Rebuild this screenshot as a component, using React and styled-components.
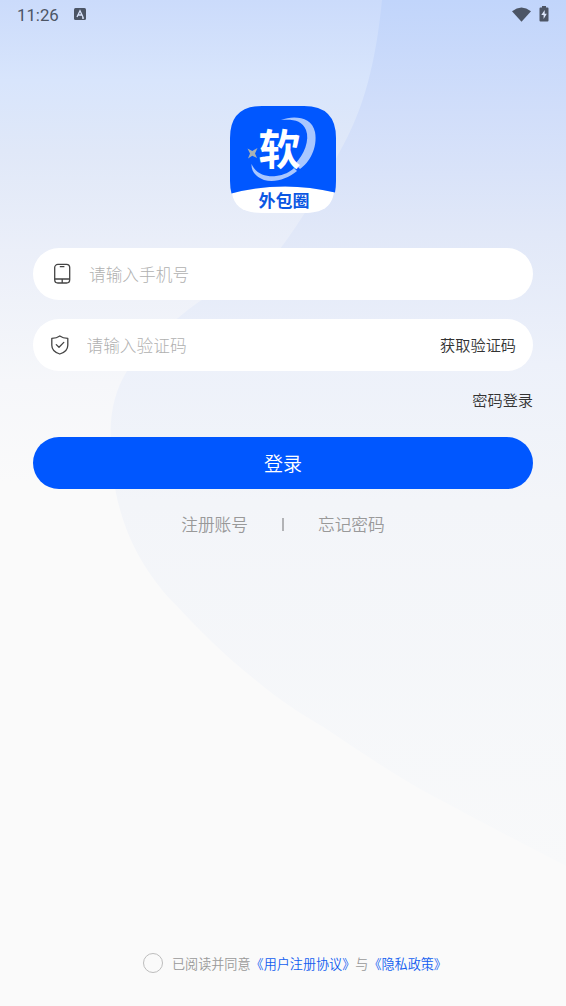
import React from "react";
import styled, { createGlobalStyle } from "styled-components";

const GlobalStyle = createGlobalStyle`
  * { box-sizing: border-box; }
  body {
    margin: 0;
    font-family: "Noto Sans CJK SC", sans-serif;
    font-weight: 350;
  }
  button, input { font-family: inherit; font-weight: inherit; border: 0; padding: 0; background: none; }
`;

const Screen = styled.main`
  position: relative;
  width: 566px;
  height: 1006px;
  overflow: hidden;
  display: flex;
  flex-direction: column;
  isolation: isolate;
`;

const Backdrop = styled.svg`
  position: absolute;
  inset: 0;
  z-index: -1;
`;

const StatusBar = styled.header`
  display: flex;
  align-items: center;
  height: 28px;
  padding: 0 17px;
  color: #4c5565;
`;

const Clock = styled.time`
  font: 400 16.8px/28px Roboto, sans-serif;
  padding-top: 2px;
  width: 57px;
`;

const StatusIcons = styled.div`
  display: flex;
  align-items: center;
  gap: 8px;
  margin-left: auto;
`;

const Logo = styled.svg`
  display: block;
  margin: 78px auto 35px;
`;

const Form = styled.form`
  display: flex;
  flex-direction: column;
  padding: 0 33px;
`;

const Field = styled.label`
  display: flex;
  align-items: center;
  height: 52px;
  margin-bottom: ${(p) => p.$gap}px;
  padding: 0 17px;
  border-radius: 26px;
  background: #fff;
`;

const Input = styled.input`
  flex: 1;
  min-width: 0;
  height: 50px;
  margin-left: ${(p) => p.$indent}px;
  font-size: 16.7px;
  font-weight: 300;
  outline: none;
  &::placeholder { color: #b0b0b0; opacity: 1; }
`;

const TextButton = styled.button`
  align-self: ${(p) => p.$align || "center"};
  padding-bottom: 2px;
  font-size: 15.2px;
  line-height: 20px;
  color: #333;
`;

const SubmitButton = styled.button`
  height: 52px;
  margin-top: 26px;
  padding-bottom: 1px;
  border-radius: 26px;
  background: #0057ff;
  color: #fff;
  font-size: 19px;
`;

const AccountLinks = styled.nav`
  display: flex;
  justify-content: center;
  align-items: center;
  margin-top: 23px;
  font-size: 16.7px;
  line-height: 25px;
  color: #999;
`;

const Divider = styled.span`
  width: 2px;
  height: 13px;
  margin: 0 34px;
  background: #b2b3b6;
`;

const Agreement = styled.footer`
  display: flex;
  align-items: center;
  margin-top: auto;
  height: 20px;
  margin-bottom: 33px;
  padding-left: 143px;
  font-size: 13.1px;
  color: #999;
  white-space: nowrap;
`;

const Radio = styled.span`
  width: 20px;
  height: 20px;
  margin-right: 9px;
  border: 1.5px solid #bdbdbd;
  border-radius: 50%;
`;

const PolicyLink = styled.span`
  color: #125ef0;
`;

function Background() {
  return (
    <Backdrop width="566" height="1006" viewBox="0 0 566 1006">
      <defs>
        <linearGradient id="base" x1="0" y1="0" x2="0" y2="1">
          <stop offset="0" stopColor="#cbdbfb" />
          <stop offset="0.08" stopColor="#d8e5fc" />
          <stop offset="0.15" stopColor="#e0e8f8" />
          <stop offset="0.25" stopColor="#ebeff9" />
          <stop offset="0.38" stopColor="#f6f7fa" />
          <stop offset="0.48" stopColor="#fafafa" />
        </linearGradient>
        <linearGradient id="curve" gradientUnits="userSpaceOnUse" x1="0" y1="0" x2="0" y2="866">
          <stop offset="0" stopColor="#c1d5fb" />
          <stop offset="0.13" stopColor="#d1defa" />
          <stop offset="0.27" stopColor="#e1e8f8" />
          <stop offset="0.42" stopColor="#edf1fa" />
          <stop offset="0.58" stopColor="#f3f5f9" />
          <stop offset="1" stopColor="#f8f9fa" />
        </linearGradient>
      </defs>
      <rect width="566" height="1006" fill="url(#base)" />
      <path
        d="M382 0C376 60 365 108 339 153C321 187 300 223 280 249C251 274 216 286 178 318C155 334 137 351 127 371C115 390 109 415 111 442C111 468 115 499 126 528C138 560 158 587 175 604C199 630 225 656 253 678C280 701 301 714 325 728C361 752 397 777 433 796C478 820 521 843 566 866V0Z"
        fill="url(#curve)"
      />
    </Backdrop>
  );
}

function AppLogo() {
  return (
    <Logo width="106" height="107" viewBox="0 0 106 107">
      <path d="M2 87Q53 75 104 86C102 101 92 107 74 107H32C14 107 4 101 2 87Z" fill="#fff" />
      <path d="M32 0H74Q106 0 106 32V75Q106 81 105 86.5Q53 74 1.5 87.5Q0 82 0 75V32Q0 0 32 0Z" fill="#0057ff" />
      <path d="M51 14C64 9 82 11 85 26C88 42 79 57 70 63L65 58C74 49 80 34 76 24C72 14 62 13 51 14Z" fill="#a9c7ff" />
      <path d="M21.5 58C26 68 36 71 46 70C54 69 60 66 64 62L67 65C57 73 45 77 34 74C26 71 21 65 21.5 58Z" fill="#a9c7ff" />
      <path d="M17.5 42.5L22.3 45L27.5 42L25 47.5L27 52L22.3 49.7L18 52.5L20 47.5Z" fill="#a9b2b5" />
      <text x="49.5" y="58.5" textAnchor="middle" fontSize="42" fontWeight="700" fill="#fff">软</text>
      <text x="54" y="100.5" textAnchor="middle" fontSize="17" fontWeight="700" fill="#0b57e3">外包圈</text>
    </Logo>
  );
}

function PhoneIcon() {
  return (
    <svg width="24" height="24" viewBox="0 0 24 24" fill="none" stroke="#444" strokeWidth="1.3">
      <rect x="4.7" y="2.4" width="15" height="18.6" rx="3.2" />
      <path d="M9.8 4.6H14.4M4.7 17H19.7M12.2 17V21" />
    </svg>
  );
}

function ShieldIcon() {
  return (
    <svg width="20" height="22" viewBox="0 0 20 22" fill="none" stroke="#444" strokeWidth="1.3" strokeLinecap="round" strokeLinejoin="round">
      <path d="M9.8 2C7.5 3.7 4.8 4.3 1.8 4.4V11.2C1.8 15.8 5 18.5 9.8 20C14.6 18.5 17.8 15.8 17.8 11.2V4.4C14.8 4.3 12.1 3.7 9.8 2Z" />
      <path d="M6.3 10.6L9 13.2L13.8 8.4" />
    </svg>
  );
}

export default function App() {
  return (
    <>
      <GlobalStyle />
      <Screen>
        <Background />
        <StatusBar>
          <Clock>11:26</Clock>
          <svg width="12" height="12" viewBox="0 0 12 12">
            <rect width="12" height="12" rx="1.5" fill="currentColor" />
            <path d="M3 9L6 2.8L9 9M4.2 7H7.8M8 10H10" fill="none" stroke="#d7e2fa" strokeWidth="1.3" />
          </svg>
          <StatusIcons>
            <svg width="19" height="15" viewBox="0 0 19 15">
              <path d="M0 4.2Q9.5 -3 19 4.2L9.5 14.8Z" fill="currentColor" />
            </svg>
            <svg width="10" height="16" viewBox="0 0 10 16">
              <path d="M3 0H7V1.5H8.5Q9.5 1.5 9.5 2.5V14.5Q9.5 15.5 8.5 15.5H1.5Q.5 15.5 .5 14.5V2.5Q.5 1.5 1.5 1.5H3Z" fill="currentColor" />
              <path d="M5.7 4L2.3 9.1H4.6V13L7.8 7.8H5.7Z" fill="#dce6fa" />
            </svg>
          </StatusIcons>
        </StatusBar>
        <AppLogo />
        <Form onSubmit={(e) => e.preventDefault()}>
          <Field $gap={19}>
            <PhoneIcon />
            <Input $indent={15} placeholder="请输入手机号" />
          </Field>
          <Field $gap={18}>
            <ShieldIcon />
            <Input $indent={16.5} placeholder="请输入验证码" />
            <TextButton type="button">获取验证码</TextButton>
          </Field>
          <TextButton type="button" $align="flex-end">密码登录</TextButton>
          <SubmitButton>登录</SubmitButton>
        </Form>
        <AccountLinks>
          <span>注册账号</span>
          <Divider />
          <span>忘记密码</span>
        </AccountLinks>
        <Agreement>
          <Radio />
          <span>已阅读并同意</span>
          <PolicyLink>《用户注册协议》</PolicyLink>
          <span>与</span>
          <PolicyLink>《隐私政策》</PolicyLink>
        </Agreement>
      </Screen>
    </>
  );
}
